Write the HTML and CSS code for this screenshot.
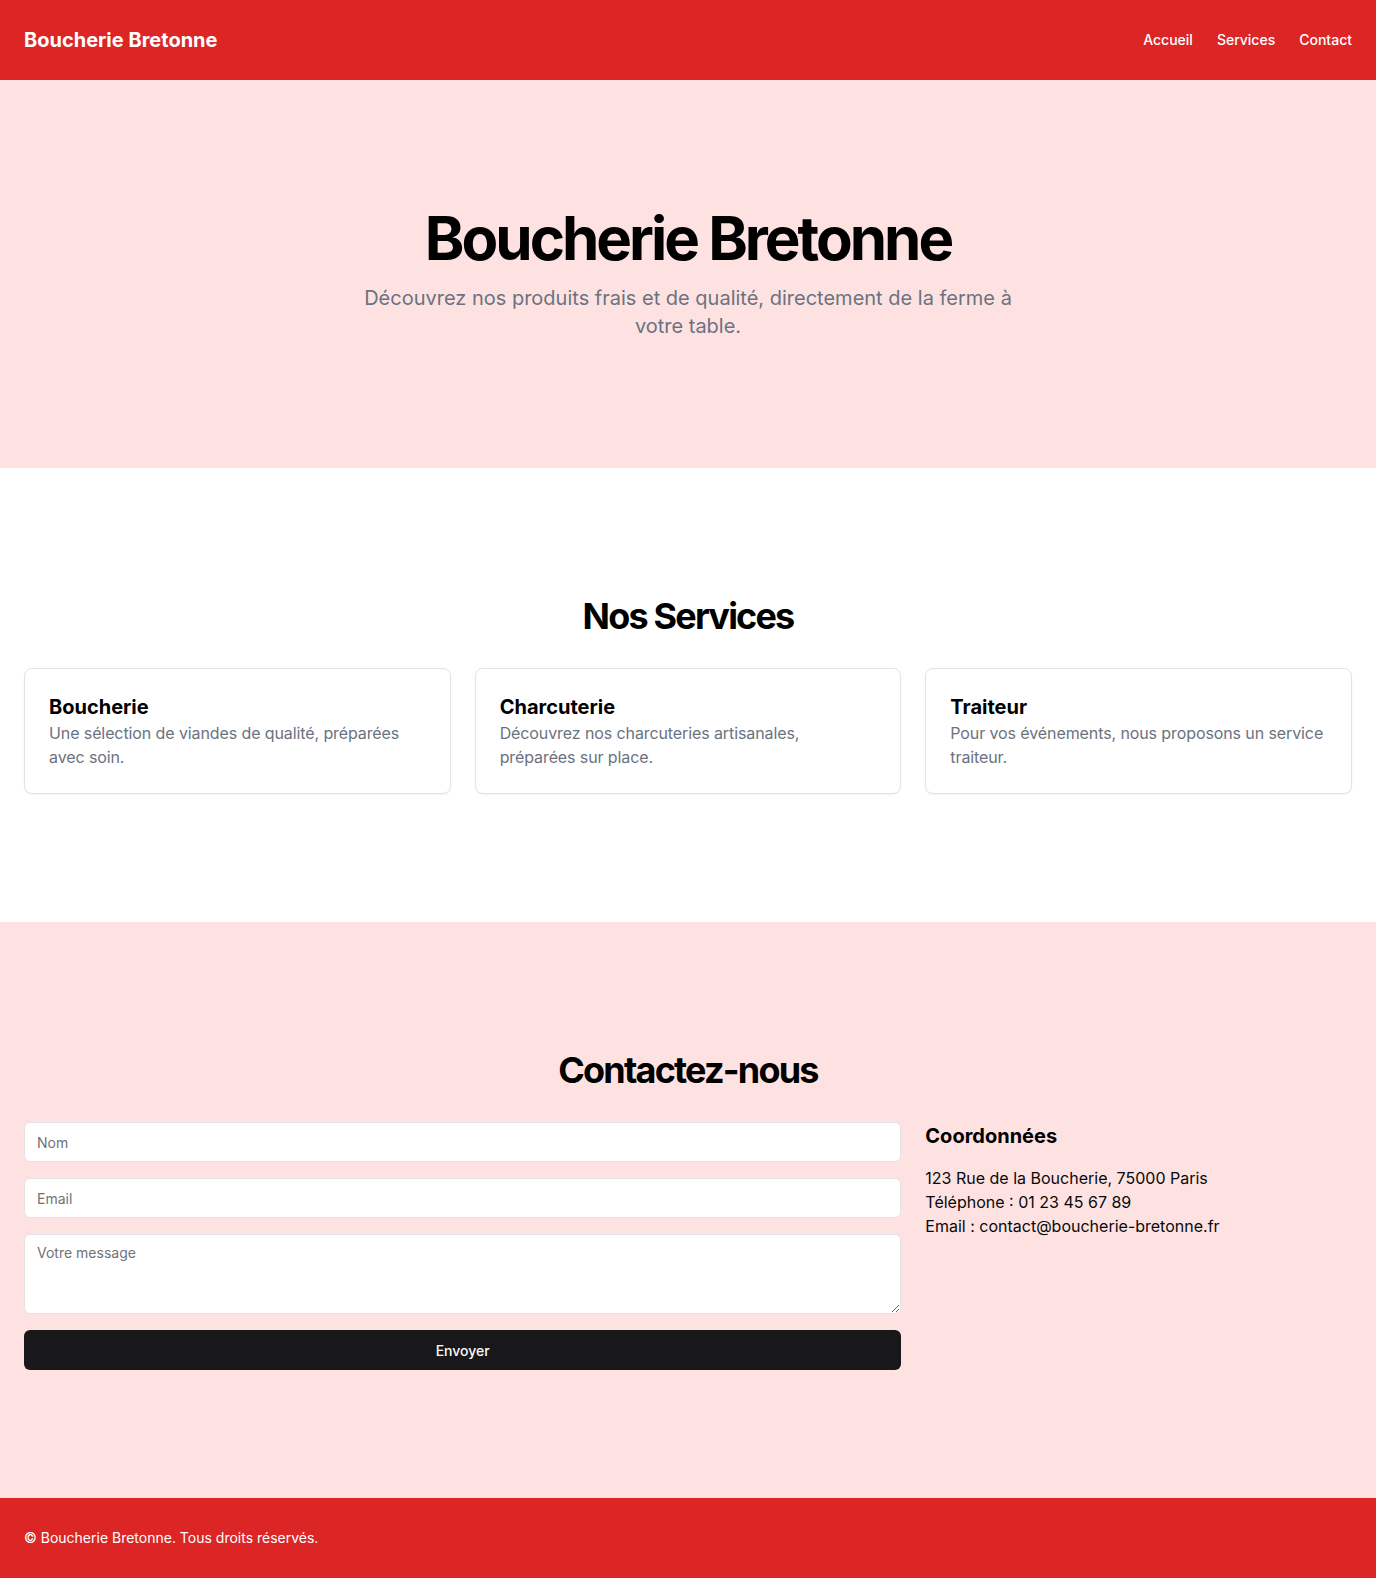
FILE: index.html
```html
<!DOCTYPE html>
<html lang="fr">
<head>
<meta charset="utf-8">
<title>Boucherie Bretonne</title>
<link rel="stylesheet" href="styles.css">
</head>
<body>
<header class="site-header">
  <div class="brand">Boucherie Bretonne</div>
  <nav class="nav">
    <a href="#">Accueil</a>
    <a href="#services">Services</a>
    <a href="#contact">Contact</a>
  </nav>
</header>
<main>
  <section class="hero">
    <h1 class="hero-title">Boucherie Bretonne</h1>
    <p class="hero-sub">Découvrez nos produits frais et de qualité, directement de la ferme à votre table.</p>
  </section>
  <section class="services" id="services">
    <h2 class="section-title">Nos Services</h2>
    <div class="cards">
      <div class="card">
        <h3 class="card-title">Boucherie</h3>
        <p class="card-text">Une sélection de viandes de qualité, préparées avec soin.</p>
      </div>
      <div class="card">
        <h3 class="card-title">Charcuterie</h3>
        <p class="card-text">Découvrez nos charcuteries artisanales, préparées sur place.</p>
      </div>
      <div class="card">
        <h3 class="card-title">Traiteur</h3>
        <p class="card-text">Pour vos événements, nous proposons un service traiteur.</p>
      </div>
    </div>
  </section>
  <section class="contact" id="contact">
    <h2 class="section-title">Contactez-nous</h2>
    <div class="contact-grid">
      <form class="form">
        <input class="field" type="text" placeholder="Nom">
        <input class="field" type="email" placeholder="Email">
        <textarea class="field area" placeholder="Votre message"></textarea>
        <button class="btn" type="button">Envoyer</button>
      </form>
      <div class="info">
        <h3 class="info-title">Coordonnées</h3>
        <p class="info-line">123 Rue de la Boucherie, 75000 Paris</p>
        <p class="info-line">Téléphone : 01 23 45 67 89</p>
        <p class="info-line">Email : contact@boucherie-bretonne.fr</p>
      </div>
    </div>
  </section>
</main>
<footer class="site-footer">
  <p>© Boucherie Bretonne. Tous droits réservés.</p>
</footer>
</body>
</html>
```
FILE: styles.css
```css
* { box-sizing: border-box; }
html, body { margin: 0; padding: 0; }
body {
  font-family: Inter, "Noto Sans", "Liberation Sans", sans-serif;
  color: #09090b;
  background: #ffffff;
}
h1, h2, h3, p { margin: 0; }

.site-header {
  height: 80px;
  background: #dc2626;
  color: #ffffff;
  display: flex;
  align-items: center;
  justify-content: space-between;
  padding: 0 24px;
}
.brand {
  font-size: 20px;
  line-height: 28px;
  font-weight: 700;
}
.nav {
  display: flex;
  gap: 24px;
}
.nav a {
  color: #ffffff;
  text-decoration: none;
  font-size: 14px;
  line-height: 20px;
  font-weight: 500;
}

.hero {
  background: #fee2e2;
  padding: 128px 24px;
  text-align: center;
}
.hero-title {
  font-size: 60px;
  line-height: 60px;
  font-weight: 700;
  letter-spacing: -0.05em;
  color: #000;
  margin-bottom: 16px;
}
.hero-sub {
  max-width: 672px;
  margin: 0 auto;
  font-size: 20px;
  line-height: 28px;
  color: #6b7280;
}

.services {
  background: #ffffff;
  padding: 128px 24px;
}
.section-title {
  text-align: center;
  font-size: 36px;
  line-height: 40px;
  font-weight: 700;
  letter-spacing: -0.05em;
  color: #000;
  margin-bottom: 32px;
}
.cards {
  display: grid;
  grid-template-columns: repeat(3, 1fr);
  gap: 24px;
}
.card {
  border: 1px solid #e4e4e7;
  border-radius: 8px;
  background: #fff;
  padding: 24px;
  box-shadow: 0 1px 2px rgba(0,0,0,0.05);
}
.card-title {
  font-size: 20px;
  line-height: 28px;
  font-weight: 700;
  color: #000;
}
.card-text {
  font-size: 16px;
  line-height: 24px;
  letter-spacing: -0.1px;
  color: #6b7280;
}

.contact {
  background: #fee2e2;
  padding: 128px 24px;
}
.contact-grid {
  display: grid;
  grid-template-columns: repeat(3, 1fr);
  gap: 24px;
}
.form {
  grid-column: span 2;
  display: flex;
  flex-direction: column;
  gap: 16px;
}
.field {
  display: block;
  width: 100%;
  height: 40px;
  border: 1px solid #e4e4e7;
  border-radius: 6px;
  background: #ffffff;
  padding: 8px 12px;
  font-family: inherit;
  font-size: 14px;
  line-height: 20px;
  color: #09090b;
  margin: 0;
}
.field::placeholder { color: #71717a; }
.area {
  height: 80px;
  min-height: 80px;
  resize: vertical;
}
.btn {
  height: 40px;
  border: none;
  border-radius: 6px;
  background: #18181b;
  color: #fafafa;
  font-family: inherit;
  font-size: 14px;
  font-weight: 500;
  padding: 8px 16px;
}
.info-title {
  font-size: 20px;
  line-height: 28px;
  font-weight: 700;
  color: #000;
  margin-bottom: 16px;
}
.info-line {
  font-size: 16px;
  line-height: 24px;
  color: #09090b;
}

.site-footer {
  background: #dc2626;
  color: #fff;
  height: 80px;
  display: flex;
  align-items: center;
  padding: 0 24px;
}
.site-footer p {
  font-size: 14px;
  line-height: 20px;
}
```
